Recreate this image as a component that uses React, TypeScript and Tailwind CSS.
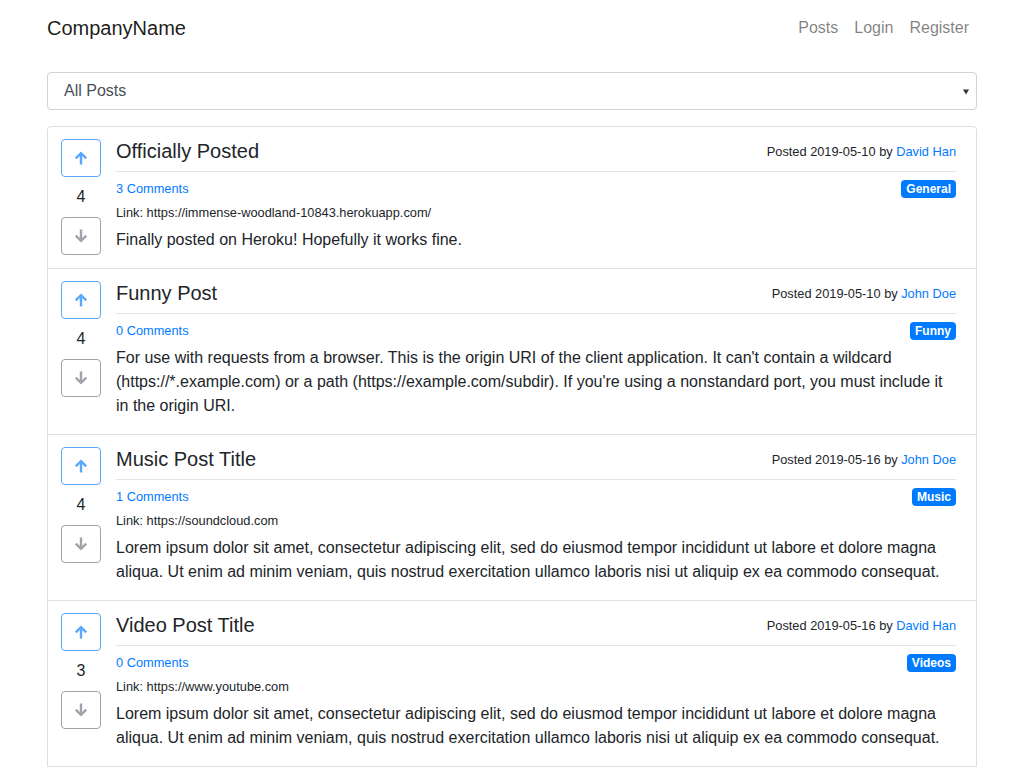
import React from "react";

type Post = {
  title: string;
  date: string;
  author: string;
  comments: number;
  tag: string;
  link?: string;
  body: string;
  votes: number;
};

const posts: Post[] = [
  {
    title: "Officially Posted",
    date: "2019-05-10",
    author: "David Han",
    comments: 3,
    tag: "General",
    link: "https://immense-woodland-10843.herokuapp.com/",
    body: "Finally posted on Heroku! Hopefully it works fine.",
    votes: 4,
  },
  {
    title: "Funny Post",
    date: "2019-05-10",
    author: "John Doe",
    comments: 0,
    tag: "Funny",
    body: "For use with requests from a browser. This is the origin URI of the client application. It can't contain a wildcard (https://*.example.com) or a path (https://example.com/subdir). If you're using a nonstandard port, you must include it in the origin URI.",
    votes: 4,
  },
  {
    title: "Music Post Title",
    date: "2019-05-16",
    author: "John Doe",
    comments: 1,
    tag: "Music",
    link: "https://soundcloud.com",
    body: "Lorem ipsum dolor sit amet, consectetur adipiscing elit, sed do eiusmod tempor incididunt ut labore et dolore magna aliqua. Ut enim ad minim veniam, quis nostrud exercitation ullamco laboris nisi ut aliquip ex ea commodo consequat.",
    votes: 4,
  },
  {
    title: "Video Post Title",
    date: "2019-05-16",
    author: "David Han",
    comments: 0,
    tag: "Videos",
    link: "https://www.youtube.com",
    body: "Lorem ipsum dolor sit amet, consectetur adipiscing elit, sed do eiusmod tempor incididunt ut labore et dolore magna aliqua. Ut enim ad minim veniam, quis nostrud exercitation ullamco laboris nisi ut aliquip ex ea commodo consequat.",
    votes: 3,
  },
];

function Arrow({ down }: { down?: boolean }) {
  return (
    <svg width="14" height="14" viewBox="0 0 14 14" fill="none" stroke="currentColor" strokeWidth="2.4" className={down ? "rotate-180" : ""}>
      <path d="M7 13.5V2.2" />
      <path d="M1.8 7.3L7 2.1L12.2 7.3" />
    </svg>
  );
}

export default function App() {
  return (
    <div className="min-h-[768px] bg-white text-[#212529]" style={{ fontFamily: '"Liberation Sans", Arial, sans-serif' }}>
      <div className="mx-auto w-[930px]">
        <nav className="flex h-[56px] items-center justify-between">
          <span className="text-[20px] leading-[30px] text-[rgba(0,0,0,0.9)]">CompanyName</span>
          <div className="flex text-[16px] leading-6 text-[rgba(0,0,0,0.5)]">
            <span className="px-2">Posts</span>
            <span className="px-2">Login</span>
            <span className="px-2">Register</span>
          </div>
        </nav>

        <div className="mt-4 flex h-[38px] items-center justify-between rounded border border-[#ced4da] pl-4 pr-[7px]">
          <span className="text-[16px] text-[#495057]">All Posts</span>
          <svg width="6" height="6" viewBox="0 0 6 6" className="mt-[1px]">
            <path d="M0 0.5H6L3 5.5Z" fill="#333" />
          </svg>
        </div>

        <div className="mt-4 rounded-t border border-[rgba(0,0,0,0.125)]">
          {posts.map((p, i) => (
            <div
              key={i}
              className={`flex pt-3 pb-3 pl-[13px] pr-5 ${i > 0 ? "border-t border-[rgba(0,0,0,0.125)]" : ""}`}
            >
              <div className="flex w-[40px] shrink-0 flex-col items-center">
                <div className="flex h-[38px] w-[40px] items-center justify-center rounded border border-[#007bff] text-[#007bff] opacity-65">
                  <Arrow />
                </div>
                <div className="flex h-[40px] items-center justify-center text-[16px]">{p.votes}</div>
                <div className="flex h-[38px] w-[40px] items-center justify-center rounded border border-[#6c757d] text-[#6c757d] opacity-65">
                  <Arrow down />
                </div>
              </div>
              <div className="ml-[15px] min-w-0 flex-1">
                <div className="flex items-center justify-between">
                  <h5 className="text-[20px] leading-[24px] font-normal">{p.title}</h5>
                  <span className="text-[12.8px] leading-[19px]">
                    Posted {p.date} by <span className="text-[#007bff]">{p.author}</span>
                  </span>
                </div>
                <div className="mt-2 border-t border-[rgba(0,0,0,0.1)]" />
                <div className="mt-2 flex h-[18px] items-center justify-between">
                  <span className="text-[12.8px] text-[#007bff]">{p.comments} Comments</span>
                  <span className="rounded bg-[#007bff] px-[5px] text-[12px] leading-[18px] font-bold text-white">{p.tag}</span>
                </div>
                {p.link && (
                  <div className="mt-[5px] text-[12.8px] leading-[19px]">Link: {p.link}</div>
                )}
                <p className="mt-[6px] mb-1 text-[16px] leading-6">{p.body}</p>
              </div>
            </div>
          ))}
        </div>
      </div>
    </div>
  );
}
